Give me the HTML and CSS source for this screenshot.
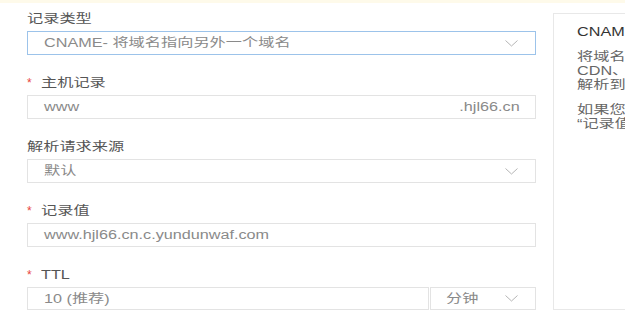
FILE: index.html
```html
<!DOCTYPE html>
<html lang="zh-CN">
<head>
<meta charset="utf-8">
<title>添加记录</title>
<link rel="stylesheet" href="styles.css">
</head>
<body>
<div class="notice-strip"></div>
<div class="main">
  <div class="form">
    <div class="group">
      <div class="label"><span class="sx">记录类型</span></div>
      <div class="control select focused">
        <span class="sx value">CNAME- 将域名指向另外一个域名</span>
        <svg class="chev" width="13" height="7" viewBox="0 0 13 7"><polyline points="0.5,0.5 6.5,6 12.5,0.5" fill="none" stroke="#b5b5b5" stroke-width="1"/></svg>
      </div>
    </div>
    <div class="group">
      <div class="label"><span class="star">*</span><span class="sx">主机记录</span></div>
      <div class="control input">
        <span class="sx value">www</span>
        <span class="sx-r value">.hjl66.cn</span>
      </div>
    </div>
    <div class="group">
      <div class="label"><span class="sx">解析请求来源</span></div>
      <div class="control select">
        <span class="sx value">默认</span>
        <svg class="chev" width="13" height="7" viewBox="0 0 13 7"><polyline points="0.5,0.5 6.5,6 12.5,0.5" fill="none" stroke="#b5b5b5" stroke-width="1"/></svg>
      </div>
    </div>
    <div class="group">
      <div class="label"><span class="star">*</span><span class="sx">记录值</span></div>
      <div class="control input">
        <span class="sx value">www.hjl66.cn.c.yundunwaf.com</span>
      </div>
    </div>
    <div class="group last">
      <div class="label"><span class="star">*</span><span class="sx">TTL</span></div>
      <div class="ttl-row">
        <div class="control input ttl-value">
          <span class="sx value">10 (推荐)</span>
        </div>
        <div class="control select ttl-unit">
          <span class="sx value">分钟</span>
          <svg class="chev" width="13" height="7" viewBox="0 0 13 7"><polyline points="0.5,0.5 6.5,6 12.5,0.5" fill="none" stroke="#b5b5b5" stroke-width="1"/></svg>
        </div>
      </div>
    </div>
  </div>
  <aside class="help">
    <div class="help-title"><span class="sx">CNAME</span></div>
    <div class="help-para">
      <div class="line"><span class="sx">将域名指向另外一个域名</span></div>
      <div class="line"><span class="sx">CDN、云防护等服务</span></div>
      <div class="line"><span class="sx">解析到服务商的域名</span></div>
    </div>
    <div class="help-para">
      <div class="line"><span class="sx">如果您需要指向另一个域名</span></div>
      <div class="line"><span class="sx">“记录值”填写对应域名</span></div>
    </div>
  </aside>
</div>
</body>
</html>
```
FILE: styles.css
```css
html, body {
  margin: 0;
  padding: 0;
  background: #ffffff;
  overflow: hidden;
  width: 625px;
  height: 332px;
}
body {
  font-family: "Liberation Sans", "Noto Sans CJK SC", sans-serif;
  font-size: 12px;
  color: #555;
}
.notice-strip {
  height: 3px;
  background: #fefaea;
}
.main {
  display: flex;
  align-items: flex-start;
  gap: 17px;
  padding: 7px 0 0 27px;
}
.form {
  width: 509px;
  flex-shrink: 0;
}
.group {
  margin-bottom: 19px;
}
.group.last {
  margin-bottom: 0;
}
.label {
  height: 18px;
  line-height: 18px;
  margin-bottom: 3px;
  color: #555;
  white-space: nowrap;
  display: flex;
  align-items: center;
}
.star {
  color: #e8453c;
  width: 14px;
  font-size: 12px;
  line-height: 18px;
}
.sx {
  display: inline-block;
  transform: scaleX(1.35);
  transform-origin: left center;
  white-space: nowrap;
}
.sx-r {
  display: inline-block;
  transform: scaleX(1.35);
  transform-origin: right center;
  white-space: nowrap;
}
.control {
  box-sizing: border-box;
  height: 24px;
  border: 1px solid #e3e3e3;
  background: #fff;
  display: flex;
  align-items: center;
  justify-content: space-between;
  padding: 0 15px 0 16px;
  line-height: 22px;
}
.control.focused {
  border-color: #9cc3ea;
}
.select {
  padding-right: 17px;
}
.value {
  color: #8a8a8a;
}
.chev {
  display: block;
  flex-shrink: 0;
}
.ttl-row {
  display: flex;
  gap: 1px;
}
.ttl-value {
  flex: 1;
  height: 23px;
}
.ttl-unit {
  width: 106px;
  flex-shrink: 0;
  height: 23px;
  padding-left: 15px;
}
.help {
  box-sizing: border-box;
  flex-shrink: 0;
  width: 240px;
  height: 297px;
  margin-top: 3px;
  border: 1px solid #e8e8e8;
  padding: 11px 0 0 23px;
  white-space: nowrap;
  overflow: hidden;
}
.help-title {
  font-size: 12px;
  line-height: 14px;
  color: #333;
  margin-bottom: 11px;
}
.help-para {
  font-size: 12px;
  line-height: 14px;
  color: #666;
  margin-bottom: 11px;
}
.line {
  height: 14px;
}
```
